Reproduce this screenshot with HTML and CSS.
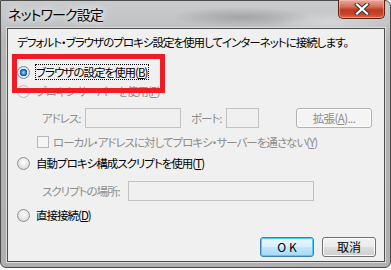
FILE: index.html
```html
<!DOCTYPE html>
<html lang="ja">
<head>
  <meta charset="UTF-8">
  <title>ネットワーク設定</title>
  <link rel="stylesheet" href="styles.css">
</head>
<body>
  <div class="window">
    <div class="titlebar">
      <span class="title">ネットワーク設定</span>
      <span class="close">
        <svg width="18" height="12" viewBox="0 0 18 12">
          <path d="M4 1.5 L14 10.5 M14 1.5 L4 10.5" stroke="#3a3a3a" stroke-width="4.2" stroke-linecap="square"/>
          <path d="M4 1.5 L14 10.5 M14 1.5 L4 10.5" stroke="#fff" stroke-width="2.2" stroke-linecap="square"/>
        </svg>
      </span>
    </div>
    <div class="client">
      <p class="intro">デフォルト・ブラウザのプロキシ設定を使用してインターネットに接続します。</p>

      <div class="option first">
        <span class="radio on"></span>
        <span class="label focus">ブラウザの設定を使用(<u>B</u>)</span>
      </div>
      <div class="option tight disabled">
        <span class="radio off"></span>
        <span class="label">プロキシ サーバーを使用(<u>P</u>)</span>
      </div>

      <div class="field-row disabled">
        <span class="field-label addr-label">アドレス:</span>
        <span class="box address"></span>
        <span class="field-label port-label">ポート:</span>
        <span class="box port"></span>
        <span class="btn btn-off">拡張(<u>A</u>)...</span>
      </div>

      <div class="option check-row disabled">
        <span class="check"></span>
        <span class="label">ローカル・アドレスに対してプロキシ・サーバーを通さない(<u>Y</u>)</span>
      </div>

      <div class="option">
        <span class="radio"></span>
        <span class="label">自動プロキシ構成スクリプトを使用(<u>T</u>)</span>
      </div>

      <div class="field-row script-row disabled">
        <span class="field-label script-label">スクリプトの場所:</span>
        <span class="box script"></span>
      </div>

      <div class="option">
        <span class="radio"></span>
        <span class="label">直接接続(<u>D</u>)</span>
      </div>

      <div class="buttons">
        <span class="btn btn-default">OK</span>
        <span class="btn">取消</span>
      </div>
    </div>
  </div>
  <div class="highlight"></div>
</body>
</html>
```

FILE: styles.css
```css
body {
  margin: 0;
  background: #ffffff;
  font-family: "Noto Sans CJK JP", "Noto Sans", sans-serif;
  font-feature-settings: "palt";
}
.window {
  width: 389px;
  height: 266px;
  border: 1px solid #4c4c4c;
  border-radius: 0 6px 6px 6px;
  background: linear-gradient(180deg, #c9cbcd 0px, #c2c4c6 20px, #b4b6b8 40px, #adafb1 100%);
  display: flex;
  flex-direction: column;
}
.titlebar {
  height: 27px;
  display: flex;
  justify-content: space-between;
  align-items: flex-start;
  background:
    radial-gradient(ellipse 70px 10px at 240px 16px, rgba(120,122,124,.45), rgba(120,122,124,0)),
    radial-gradient(ellipse 60px 12px at 330px 22px, rgba(230,232,234,.5), rgba(230,232,234,0));
}
.title {
  margin: 3px 0 0 7px;
  font-size: 14px;
  letter-spacing: -0.9px;
  line-height: 20px;
  color: #000;
  text-shadow: 0 0 6px #fff, 0 0 10px rgba(255,255,255,.8);
}
.close {
  width: 45px;
  height: 18px;
  margin: -1px 5px 0 0;
  border: 1px solid #5a2017;
  border-top: none;
  border-radius: 0 0 5px 5px;
  background: linear-gradient(180deg, #e7a99c 0%, #d6735f 35%, #c0381f 55%, #c8462c 80%, #e0674b 100%);
  box-shadow: inset 0 0 0 1px rgba(255,200,190,.5);
  display: flex;
  align-items: center;
  justify-content: center;
}
.client {
  margin: 0 5px 0 6px;
  height: 232px;
  border: 1px solid #4e4e4e;
  box-shadow: 0 0 0 1px #dcdcdc;
  background: #f0f0f0;
  padding: 0 8px 0 9px;
  font-size: 11.5px;
  letter-spacing: -1px;
  color: #000;
  display: flex;
  flex-direction: column;
}
.intro {
  margin: 6px 0 0 0;
  line-height: 14px;
  white-space: nowrap;
}
.option {
  display: flex;
  align-items: center;
  height: 14px;
  margin-top: 7px;
  white-space: nowrap;
}
.option.first {
  margin-top: 16px;
}
.option.tight {
  margin-top: 5px;
}
.label {
  margin-left: 6px;
  line-height: 14px;
  padding-right: 1px;
}
.focus {
  outline: 1px dotted #000;
  outline-offset: 0;
}
.disabled {
  color: #8d8d8d;
}
.radio {
  width: 11px;
  height: 11px;
  border-radius: 50%;
  border: 1px solid #8f8f8f;
  background: radial-gradient(circle at 50% 40%, #ffffff 0%, #e2e2e2 60%, #cfcfcf 100%);
  box-sizing: content-box;
  flex-shrink: 0;
}
.radio.on {
  border-color: #6e8aa6;
  background: radial-gradient(circle at 50% 50%, #9fd9ff 0px, #1e7fce 2.5px, #0e4f8f 3.5px, #e8eef4 4px, #d3dbe3 100%);
}
.radio.off {
  border-color: #b8b8b8;
  background: #f4f4f4;
}
.check {
  width: 10px;
  height: 10px;
  margin-left: 20px;
  border: 1px solid #b8b8b8;
  background: #f4f4f4;
  flex-shrink: 0;
}
.check-row {
  margin-top: 7px;
}
.check-row .label {
  margin-left: 4px;
}
.field-row {
  display: flex;
  align-items: center;
  height: 20px;
  margin-top: 10px;
  padding-left: 25px;
  white-space: nowrap;
}
.field-label {
  line-height: 14px;
  flex-shrink: 0;
}
.addr-label {
  width: 37px;
}
.box {
  height: 18px;
  border: 1px solid #c2c2c2;
  background: #f0f0f0;
  flex-shrink: 0;
}
.address {
  width: 94px;
  margin-left: 6px;
}
.port-label {
  width: 30px;
  margin-left: 10px;
}
.port {
  width: 31px;
  margin-left: 5px;
}
.script-row {
  margin-top: 11px;
}
.script-label {
  width: 79px;
}
.script {
  width: 184px;
  margin-left: 7px;
}
.btn {
  width: 52px;
  height: 18px;
  border: 1px solid #707070;
  border-radius: 3px;
  background: linear-gradient(180deg, #f2f2f2 0%, #ebebeb 48%, #dddddd 52%, #cfcfcf 100%);
  box-shadow: inset 0 0 0 1px #fcfcfc;
  display: flex;
  align-items: center;
  justify-content: center;
  line-height: 14px;
  letter-spacing: 0;
}
.btn-off {
  width: 74px;
  margin-left: auto;
  margin-right: 4px;
  border-color: #adb2b5;
  background: #f4f4f4;
  color: #8d8d8d;
  letter-spacing: -0.6px;
}
.btn-default {
  border-color: #3c7fb1;
  background: linear-gradient(180deg, #eaf6fd 0%, #d9f0fc 48%, #bee6fd 52%, #a7d9f5 100%);
  box-shadow: inset 0 0 0 1px #48d0f8;
  letter-spacing: 3px;
  padding-left: 3px;
  box-sizing: content-box;
}
.buttons {
  display: flex;
  justify-content: flex-end;
  gap: 8px;
  margin-top: 15px;
}
.buttons .btn {
  width: 52px;
  font-size: 12px;
}
.buttons .btn-default {
  width: 49px;
}
.highlight {
  position: absolute;
  left: 12px;
  top: 54px;
  width: 143px;
  height: 29px;
  border: 5px solid #ee1c25;
}
```
